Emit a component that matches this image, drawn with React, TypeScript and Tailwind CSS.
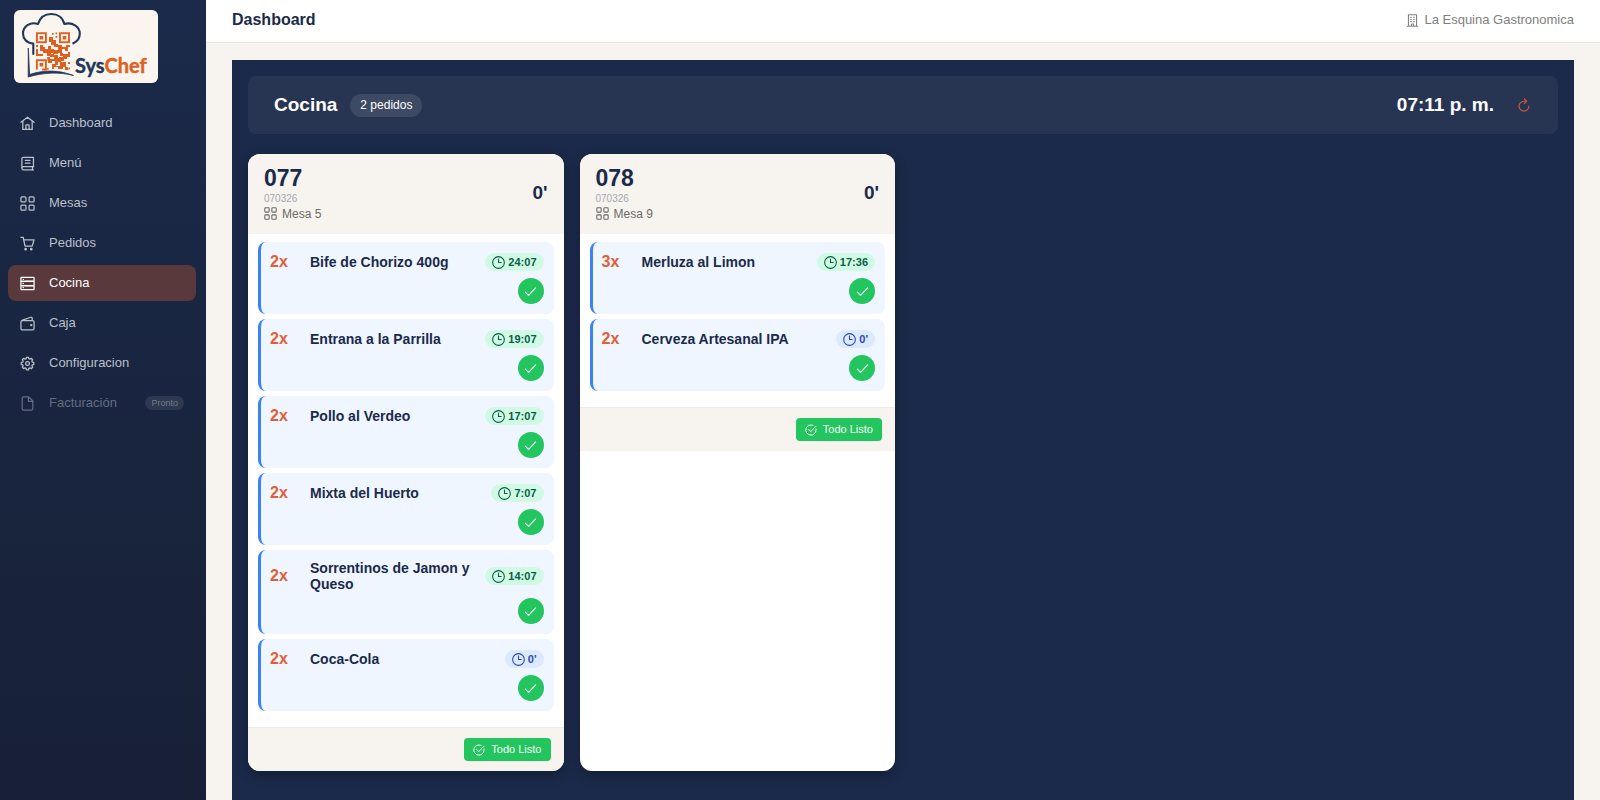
import type { ReactNode } from 'react';

type IconName =
  | 'home' | 'book' | 'grid' | 'cart' | 'server' | 'wallet' | 'cog' | 'file'
  | 'building' | 'clock' | 'check' | 'checkCircle' | 'refresh';

const GEAR =
  'M9.9 4.3 10.3 2h3.4l.4 2.3 1.9.8 1.9-1.4 2.4 2.4-1.4 1.9.8 1.9 2.3.4v3.4l-2.3.4-.8 1.9 1.4 1.9-2.4 2.4-1.9-1.4-1.9.8-.4 2.3h-3.4l-.4-2.3-1.900-.8-1.900 1.400-2.400-2.400 1.400-1.900-.8-1.900-2.300-.4v-3.400l2.300-.4.8-1.900-1.400-1.900 2.400-2.400L8 5.100z';

const shapes: Record<IconName, ReactNode> = {
  home: (
    <>
      <path d="M1.500 10 12 2l10.500 8" />
      <path d="M4.500 8.500V21.500h15V8.500" />
      <path d="M9.500 21.500v-7.500h5v7.500" />
    </>
  ),
  book: (
    <>
      <path d="M21.500 17V2H5.500A2.500 2.500 0 0 0 3 4.500v15A2.500 2.500 0 0 0 5.500 22H21.500" />
      <path d="M3.500 18.500A2.500 2.500 0 0 1 5.500 17H21.500M20 17v5M8.500 7h7.500M8.500 11.500h7.500" />
    </>
  ),
  grid: (
    <>
      <rect x="1.500" y="1.500" width="8" height="8" rx="1.500" />
      <rect x="14.500" y="1.500" width="8" height="8" rx="1.500" />
      <rect x="1.500" y="14.500" width="8" height="8" rx="1.500" />
      <rect x="14.500" y="14.500" width="8" height="8" rx="1.500" />
    </>
  ),
  cart: (
    <>
      <path d="M1.500 2H5l3 14h11.500L22.500 6H6" />
      <circle cx="9" cy="21" r="1.200" fill="currentColor" />
      <circle cx="18" cy="21" r="1.200" fill="currentColor" />
    </>
  ),
  server: (
    <>
      <rect x="1.500" y="2" width="21" height="6.600" rx=".8" />
      <rect x="1.500" y="8.600" width="21" height="6.600" rx=".8" />
      <rect x="1.500" y="15.200" width="21" height="6.600" rx=".8" />
      <path d="M5 5.300h.5M5 11.900h.5M5 18.500h.5M8.500 8.600h13M8.500 15.200h13" />
    </>
  ),
  wallet: (
    <>
      <path d="M4 7.500h16.500a2 2 0 0 1 2 2v10.500a2 2 0 0 1-2 2H3.500a2 2 0 0 1-2-2V9.500C1.500 8 2.500 7 4 6.500L17.500 2a1.500 1.500 0 0 1 2 1.500v4" />
      <circle cx="18" cy="14.500" r=".9" fill="currentColor" />
    </>
  ),
  cog: (
    <>
      <path d={GEAR} />
      <circle cx="12" cy="12" r="3" />
    </>
  ),
  file: (
    <>
      <path d="M6 1.500h8L20.500 8v12a2.500 2.500 0 0 1-2.500 2.500H6A2.500 2.500 0 0 1 3.500 20V4A2.500 2.500 0 0 1 6 1.500z" />
      <path d="M13.500 1.500V8.500h7" />
    </>
  ),
  building: (
    <>
      <path d="M4.500 22.500v-21h15v21M2.500 22.500h19M10 22.500v-4h4v4" />
      <path d="M8.500 6h1.500M14 6h1.500M8.500 10h1.500M14 10h1.500M8.500 14h1.500M14 14h1.500" />
    </>
  ),
  clock: (
    <>
      <circle cx="12" cy="12" r="10.800" />
      <path d="M12 5.500V12h5" />
    </>
  ),
  check: <path d="m2.500 13 6 6L21.500 5.500" />,
  checkCircle: (
    <>
      <path d="M22 10.500V12A10.200 10.200 0 1 1 16 2.700" />
      <path d="m7.500 11 4 4L22 4.500" />
    </>
  ),
  refresh: (
    <>
      <path d="M15.500 5.500H12A8.500 8.500 0 1 0 20.500 14" />
      <path d="m12.500 1.500 4 4-4 4" />
    </>
  ),
};

function Icon({ name, className }: { name: IconName; className: string }) {
  return (
    <svg
      viewBox="0 0 24 24"
      className={`shrink-0 ${className}`}
      fill="none"
      stroke="currentColor"
      strokeWidth="2"
      strokeLinecap="round"
      strokeLinejoin="round"
      aria-hidden="true"
    >
      {shapes[name]}
    </svg>
  );
}

function Logo() {
  return (
    <svg viewBox="0 0 144 73" className="block h-[73px] w-36 rounded-md bg-[#faf5ef]" role="img" aria-label="SysChef">
      <path
        d="M19.300 44V33.500C12.500 33 9 28.500 9 23.500c0-7 7-12 15-9.500C26 7.500 31 4 37.300 4s11.500 3.500 13 10c8-2.200 15.500 2.500 15.500 9.500 0 4.500-2.500 8-6.500 9.800"
        fill="none"
        stroke="#22375a"
        strokeWidth="2.100"
        strokeLinecap="round"
        strokeLinejoin="round"
      />
      <path d="M14.300 38 15.600 64.500C29 60 44 59.500 59.500 65.500 45 61.800 29.500 62.500 14.200 67z" fill="#22375a" stroke="#22375a" strokeWidth=".8" />
      <g fill="none" stroke="#dc6022" strokeWidth="1.900">
        <rect x="22.900" y="23.200" width="9" height="9" />
        <rect x="46" y="23.200" width="9" height="9" />
        <path d="M22.900 59.500V50.300h9v9.200h-4" />
      </g>
      <g fill="#dc6022">
        <path d="M25.600 25.900h3.600v3.600h-3.600zM48.700 25.900h3.600v3.600h-3.600zM25.600 53h3.600v3.600h-3.600z" />
        <path d="M38 23h1.700v1.700H38zM41.500 22.500h1.700v1.700h-1.700zM41.500 26h1.700v1.700h-1.700zM35 27h4v3h3v4h2v3h-4v-2h-3v-3h-2z" />
        <path d="M22 35h2v2h-2zM26 35h3v2h2v2h3v-3h3v3h3v4h-3v3h-4v-3h-4v-2h-3zM22 39h2v5h5v2h-7z" />
        <path d="M44 35h4v2h4v-2h4v2h-2v4h-3v-2h-3v4h-4zM54 42h2v5h-3v2h-4v-3h-3v-3h3v1h5zM33 47h3v2h4v-4h4v3h3v4h-3v3h-3v-4h-3v2h-4z" />
        <path d="M38 54h4v2h4v-4h6v5h-3v2h-5v-2h-4v2h-2zM54 52h2v2h-2zM51 57h3v3h-3zM33 58h1.700v1.700H33zM54.500 57.500h1.500v2h-1.500z" />
        <path d="M39 40h5v4h-5zM36 44h4v3h-4zM45 47h5v4h-5z" />
      </g>
      <text x="61" y="63" fontFamily="Lato, sans-serif" fontSize="20" fontWeight="700" fill="#22375a" stroke="#22375a" strokeWidth=".4">
        Sys
        <tspan fill="#dc6022" stroke="#dc6022">Chef</tspan>
      </text>
    </svg>
  );
}

const nav: { icon: IconName; label: string; active?: boolean }[] = [
  { icon: 'home', label: 'Dashboard' },
  { icon: 'book', label: 'Menú' },
  { icon: 'grid', label: 'Mesas' },
  { icon: 'cart', label: 'Pedidos' },
  { icon: 'server', label: 'Cocina', active: true },
  { icon: 'wallet', label: 'Caja' },
  { icon: 'cog', label: 'Configuracion' },
];

function Sidebar() {
  return (
    <aside className="w-[206px] shrink-0 bg-linear-to-b from-[#1b2a4a] to-[#172036]">
      <div className="px-3.5 pt-2.5">
        <Logo />
      </div>
      <nav className="mt-[22px] flex flex-col gap-1 pr-2.5 pl-2 text-[13px]">
        {nav.map((item) => (
          <a
            key={item.label}
            href="#"
            aria-current={item.active ? 'page' : undefined}
            className={`flex h-9 items-center gap-3.5 rounded-lg px-3 ${
              item.active ? 'bg-[#5a393c] text-white' : 'text-[#bbc0ca]'
            }`}
          >
            <Icon name={item.icon} className="size-[15px]" />
            {item.label}
          </a>
        ))}
        <div className="flex h-9 items-center gap-3.5 px-3 text-[#636c80]">
          <Icon name="file" className="size-[15px]" />
          Facturación
          <span className="ml-auto rounded-full bg-[#2e3850] px-1.5 text-[9px] leading-[14px] text-[#727b8d]">Pronto</span>
        </div>
      </nav>
    </aside>
  );
}

type Dish = { qty: number; name: string; time: string; instant?: boolean };
type Ticket = { id: string; code: string; table: string; dishes: Dish[] };

const tickets: Ticket[] = [
  {
    id: '077',
    code: '070326',
    table: 'Mesa 5',
    dishes: [
      { qty: 2, name: 'Bife de Chorizo 400g', time: '24:07' },
      { qty: 2, name: 'Entrana a la Parrilla', time: '19:07' },
      { qty: 2, name: 'Pollo al Verdeo', time: '17:07' },
      { qty: 2, name: 'Mixta del Huerto', time: '7:07' },
      { qty: 2, name: 'Sorrentinos de Jamon y Queso', time: '14:07' },
      { qty: 2, name: 'Coca-Cola', time: "0'", instant: true },
    ],
  },
  {
    id: '078',
    code: '070326',
    table: 'Mesa 9',
    dishes: [
      { qty: 3, name: 'Merluza al Limon', time: '17:36' },
      { qty: 2, name: 'Cerveza Artesanal IPA', time: "0'", instant: true },
    ],
  },
];

function DishRow({ dish }: { dish: Dish }) {
  return (
    <li className="flex flex-col gap-1.5 rounded-lg border-l-[3px] border-[#3b82f6] bg-[#eff6ff] py-2.5 pr-2.5 pl-[9px]">
      <div className="flex min-h-5 items-center gap-2.5">
        <span className="w-[30px] shrink-0 text-base leading-5 font-bold text-[#e35d34]">{dish.qty}x</span>
        <span className="flex-1 text-sm leading-4 font-bold text-[#1b2a4a]">{dish.name}</span>
        <span
          className={`flex h-[18px] items-center gap-[3px] rounded-full px-[7px] text-[11px] font-bold ${
            dish.instant ? 'bg-[#dbeafe] text-[#2c47b4]' : 'bg-[#d1fae5] text-[#065f46]'
          }`}
        >
          <Icon name="clock" className="size-[13px]" />
          {dish.time}
        </span>
      </div>
      <button
        type="button"
        aria-label={`Marcar ${dish.name} como listo`}
        className="flex size-[26px] items-center justify-center self-end rounded-full bg-[#22c55e] text-white"
      >
        <Icon name="check" className="size-[13px]" />
      </button>
    </li>
  );
}

function TicketCard({ ticket }: { ticket: Ticket }) {
  return (
    <article className="overflow-hidden rounded-xl bg-white shadow-[0_4px_12px_rgba(0,0,0,0.3)]">
      <header className="flex h-20 items-center justify-between bg-[#f7f3ee] px-4 pb-[3px]">
        <div>
          <h2 className="text-[23px] leading-7 font-bold text-[#1b2a4a]">{ticket.id}</h2>
          <p className="text-[10px] leading-3.5 text-[#a5a8b0]">{ticket.code}</p>
          <p className="flex items-center gap-[5px] text-[12px] leading-4 text-[#6b6b6b]">
            <Icon name="grid" className="size-[13px]" />
            {ticket.table}
          </p>
        </div>
        <span className="text-[19px] leading-6 font-bold text-[#1b2a4a]">0'</span>
      </header>
      <ul className="flex flex-col gap-[5px] px-2.5 pt-2 pb-4">
        {ticket.dishes.map((dish) => (
          <DishRow key={dish.name} dish={dish} />
        ))}
      </ul>
      <footer className="flex justify-end border-t border-[#eeeae5] bg-[#f7f3ee] px-[13px] py-2.5">
        <button
          type="button"
          className="flex h-[23px] items-center gap-1.5 rounded bg-[#22c55e] px-[9px] text-[11px] text-white"
        >
          <Icon name="checkCircle" className="size-3" />
          Todo Listo
        </button>
      </footer>
    </article>
  );
}

export default function App() {
  return (
    <div className="flex min-h-screen bg-[#f7f3ee] font-['Liberation_Sans',Arial,sans-serif]">
      <Sidebar />
      <div className="flex min-w-0 flex-1 flex-col">
        <header className="flex items-center justify-between border-b border-[#ebe8e4] bg-white px-[26px] pt-2 pb-2.5">
          <h1 className="text-base leading-6 font-bold text-[#1b2a4a]">Dashboard</h1>
          <p className="flex items-center gap-[5px] text-[13px] text-[#808080]">
            <Icon name="building" className="size-[13px]" />
            La Esquina Gastronomica
          </p>
        </header>
        <main className="flex flex-1 flex-col px-[26px] pt-[17px]">
          <section className="flex-1 bg-[#1b2a4a] p-4">
            <div className="flex h-[58px] items-center justify-between rounded-lg bg-[#283552] pr-5 pl-[26px] text-white">
              <div className="flex items-center gap-[13px]">
                <h2 className="text-[19px] font-bold">Cocina</h2>
                <span className="rounded-full bg-[#3e4963] px-2.5 text-[12px] leading-[23px]">2 pedidos</span>
              </div>
              <div className="flex items-center gap-4">
                <time className="text-[19px] font-bold">07:11 p. m.</time>
                <button type="button" aria-label="Actualizar" className="flex size-7 items-center justify-center text-[#d05a3d]">
                  <Icon name="refresh" className="size-3.5" />
                </button>
              </div>
            </div>
            <div className="mt-5 grid grid-cols-[repeat(auto-fill,minmax(290px,1fr))] gap-4">
              {tickets.map((ticket) => (
                <TicketCard key={ticket.id} ticket={ticket} />
              ))}
            </div>
          </section>
        </main>
      </div>
    </div>
  );
}
